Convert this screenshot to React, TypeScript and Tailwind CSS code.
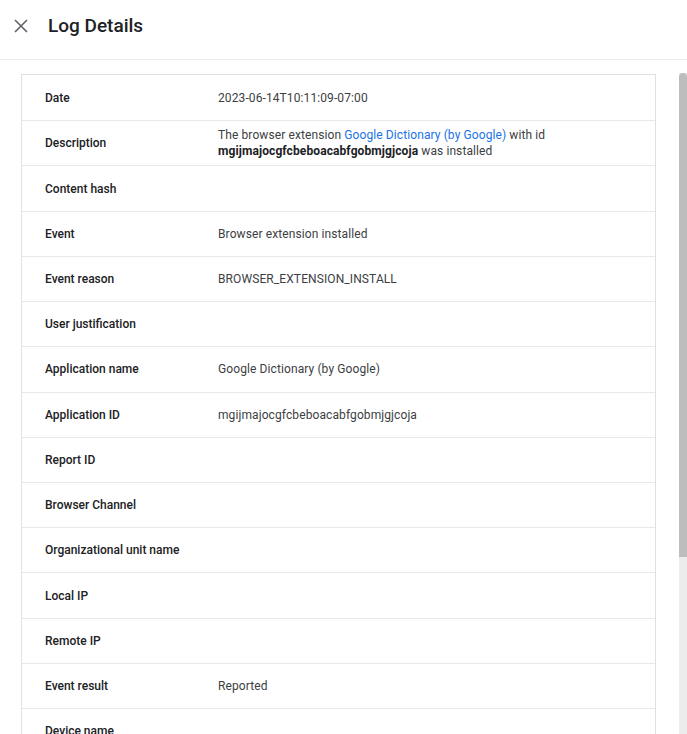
import React from 'react';

type Row = { label: string; value?: React.ReactNode };

const rows: Row[] = [
  { label: 'Date', value: '2023-06-14T10:11:09-07:00' },
  {
    label: 'Description',
    value: (
      <>
        The browser extension <span className="text-[#1a73e8]">Google Dictionary (by Google)</span> with id
        <br />
        <span className="font-bold text-[#202124]">mgijmajocgfcbeboacabfgobmjgjcoja</span> was installed
      </>
    ),
  },
  { label: 'Content hash' },
  { label: 'Event', value: 'Browser extension installed' },
  { label: 'Event reason', value: 'BROWSER_EXTENSION_INSTALL' },
  { label: 'User justification' },
  { label: 'Application name', value: 'Google Dictionary (by Google)' },
  { label: 'Application ID', value: 'mgijmajocgfcbeboacabfgobmjgjcoja' },
  { label: 'Report ID' },
  { label: 'Browser Channel' },
  { label: 'Organizational unit name' },
  { label: 'Local IP' },
  { label: 'Remote IP' },
  { label: 'Event result', value: 'Reported' },
  { label: 'Device name' },
  { label: 'Device ID' },
];

export default function App() {
  return (
    <div className="flex h-[734px] w-[687px] flex-col overflow-hidden bg-white font-['Roboto',sans-serif]">
      <header className="flex h-[60px] shrink-0 items-center border-b border-[#e8eaed] pb-[7px] pl-[13px]">
        <button className="flex h-[16px] w-[16px] items-center justify-center text-[#5f6368]">
          <svg viewBox="0 0 16 16" width="16" height="16" fill="none" stroke="currentColor" strokeWidth="1.6">
            <path d="M2 2l12 12M14 2L2 14" />
          </svg>
        </button>
        <h1 className="ml-[19px] text-[19px] font-medium text-[#202124]">Log Details</h1>
      </header>

      <div className="relative flex-1 overflow-hidden">
        <div className="pt-[14px] pl-[21px] pr-[31px]">
          <div className="border border-[#e0e0e0]">
            {rows.map((row, i) => (
              <div
                key={row.label}
                className={
                  'flex h-[45.23px] items-center text-[12px] leading-[16px] ' +
                  (i > 0 ? 'border-t border-[#e8e8e8]' : '')
                }
              >
                <div className="w-[196px] shrink-0 pl-[23px] font-medium text-[#202124]">{row.label}</div>
                <div className="tracking-[0.1px] text-[#3c4043]">{row.value}</div>
              </div>
            ))}
          </div>
        </div>

        <div className="absolute top-[13px] right-0 bottom-0 w-[8px] bg-[#ececec]">
          <div className="h-[484px] w-full rounded-t-[4px] bg-[#bdbdbd]" />
        </div>
      </div>
    </div>
  );
}
